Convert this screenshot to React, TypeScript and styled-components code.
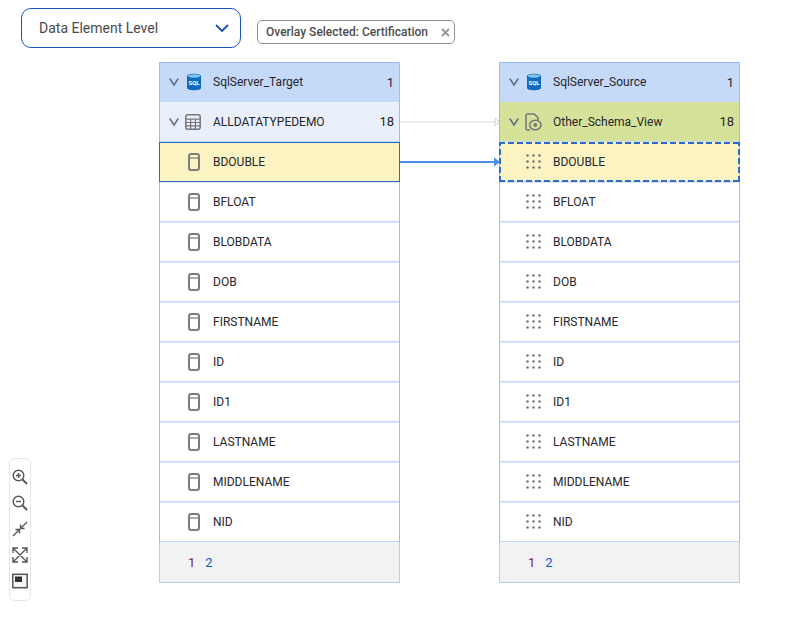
import React from 'react'
import styled, { createGlobalStyle } from 'styled-components'

const fields = ['BDOUBLE', 'BFLOAT', 'BLOBDATA', 'DOB', 'FIRSTNAME', 'ID', 'ID1', 'LASTNAME', 'MIDDLENAME', 'NID']

const GlobalStyle = createGlobalStyle`
  html, body {
    margin: 0;
    background: #fff;
    font-family: Roboto, "Liberation Sans", sans-serif;
  }
`

const Page = styled.div`
  width: 785px;
  height: 621px;
  overflow: hidden;
`

const TopBar = styled.div`
  display: flex;
  align-items: center;
  gap: 16px;
  height: 40px;
  padding: 8px 0 0 21px;
`

const LevelSelect = styled.div`
  box-sizing: border-box;
  width: 220px;
  height: 40px;
  display: flex;
  align-items: center;
  justify-content: space-between;
  padding: 0 11px 0 17px;
  border: 1px solid #1757c2;
  border-radius: 10px;
  font-size: 14px;
  color: #4a4a4a;
`

const OverlayChip = styled.div`
  box-sizing: border-box;
  width: 198px;
  height: 24px;
  margin-top: 8px;
  display: flex;
  align-items: center;
  justify-content: space-between;
  padding: 0 4px 0 8px;
  border: 1px solid #8c8c8c;
  border-radius: 5px;
  font-size: 12px;
  font-weight: 500;
  color: #4d4d4d;
`

const Stage = styled.div`
  display: flex;
  height: 539px;
  padding: 14px 0 0 9px;
`

const ZoomBar = styled.div`
  box-sizing: border-box;
  align-self: flex-end;
  width: 22px;
  height: 143px;
  margin-right: 128px;
  display: flex;
  flex-direction: column;
  align-items: center;
  gap: 10px;
  padding: 10px 0;
  border: 1px solid #e6e6e6;
  border-radius: 6px;
`

const Panel = styled.div`
  box-sizing: border-box;
  width: 241px;
  height: 521px;
  border: 1px solid #98bdf8;
`

type Tone = 'source' | 'entity' | 'view' | 'field' | 'picked' | 'dashed'

const toneColors: Record<Tone, string> = {
  source: '#c5d9f8',
  entity: '#e9f0fc',
  view: '#d6e29a',
  field: '#fff',
  picked: '#fbf3c2',
  dashed: '#fbf3c2',
}

const dash = '#2f6cc6'

const Row = styled.div<{ $tone: Tone }>`
  position: relative;
  box-sizing: border-box;
  height: 40px;
  display: flex;
  align-items: center;
  font-size: 12px;
  color: #26262b;
  border-bottom: 1px solid #c3d7f8;
  background: ${p => toneColors[p.$tone]};

  &:first-child {
    height: 39px;
  }

  ${p => p.$tone === 'field' && 'box-shadow: inset 0 1px 0 #dfe9fb;'}

  ${p =>
    p.$tone === 'picked' &&
    `
    &::after {
      content: '';
      position: absolute;
      inset: 0 -1px -1px;
      border: 1px solid #2c6cc0;
    }
  `}
  ${p =>
    p.$tone === 'dashed' &&
    `
    &::after {
      content: '';
      position: absolute;
      inset: 0 -1px -1px;
      background:
        repeating-linear-gradient(90deg, ${dash} 0 6px, transparent 6px 9px) top / 100% 2px no-repeat,
        repeating-linear-gradient(90deg, ${dash} 0 6px, transparent 6px 9px) bottom / 100% 2px no-repeat,
        repeating-linear-gradient(0deg, ${dash} 0 6px, transparent 6px 9px) left / 2px 100% no-repeat,
        repeating-linear-gradient(0deg, ${dash} 0 6px, transparent 6px 9px) right / 2px 100% no-repeat;
    }
  `}
`

const Caret = styled.span`
  width: 20px;
  margin-left: 4px;
  display: flex;
  justify-content: center;
`

const IconSlot = styled.span<{ $inset: number }>`
  box-sizing: border-box;
  width: ${p => (p.$inset > 10 ? '53px' : '29px')};
  padding-left: ${p => p.$inset}px;
  display: flex;
`

const Name = styled.span`
  flex: 1;
`

const Count = styled.span`
  margin-right: 5px;
  font-size: 13px;
`

const Pager = styled.div`
  box-sizing: border-box;
  height: 41px;
  margin: 0 -1px -1px;
  display: flex;
  align-items: center;
  gap: 10px;
  padding-left: 28px;
  border: solid #c3cddc;
  border-width: 0 1px 1px;
  border-bottom-color: #b5cdf3;
  background: #f2f2f2;
  font-size: 13px;
`

const PageLink = styled.span<{ $visited?: boolean }>`
  color: ${p => (p.$visited ? '#7a1a6a' : '#1757c2')};
`

const Connector = styled.svg`
  display: block;
  width: 100px;
  height: 240px;
  flex: none;
  margin-right: -1px;
`

const ChevronDown = () => (
  <svg width="12" height="12" viewBox="0 0 12 12" fill="none">
    <path d="M1.7 2.5 6 9l4.3-6.5" stroke="#64738a" strokeWidth="1.6" />
  </svg>
)

const SelectChevron = () => (
  <svg width="14" height="14" viewBox="0 0 14 14" fill="none">
    <path d="M1 4l6 6 6-6" stroke="#1a4fb8" strokeWidth="1.9" />
  </svg>
)

const SqlIcon = () => (
  <svg width="17" height="18" viewBox="-1 0 17 18">
    <path d="M1 3c0-3 14-3 14 0v12c0 3-14 3-14 0z" fill="#0f6cbd" />
    <ellipse cx="8" cy="3" rx="6.2" ry="1.7" fill="#7cc0ee" />
    <text x="8" y="11.5" textAnchor="middle" fontSize="6" fontWeight="700" fill="#fff" fontFamily="Roboto, sans-serif">
      SQL
    </text>
  </svg>
)

const TableIcon = () => (
  <svg width="16" height="16" viewBox="0 0 16 16" fill="none" stroke="#767676" strokeWidth="1.5">
    <rect x="0.8" y="0.8" width="14.4" height="14.4" rx="2" />
    <path d="M.8 5.2h14.4M.8 8.5h14.4M.8 11.8h14.4" strokeWidth="1.2" />
    <path d="M5.6 5.2v10M10.4 5.2v10" strokeWidth="1.2" />
  </svg>
)

const ViewIcon = () => (
  <svg width="17" height="18" viewBox="0 0 17 18" fill="none" stroke="#767676" strokeWidth="1.5">
    <path d="M5 17H2.6A1.6 1.6 0 0 1 1 15.4V2.6A1.6 1.6 0 0 1 2.6 1h6.6l3.8 3.8V7" />
    <ellipse cx="10.3" cy="12" rx="5.7" ry="4.8" />
    <circle cx="10.3" cy="12" r="1.9" fill="#767676" stroke="none" />
  </svg>
)

const ColumnIcon = () => (
  <svg width="12" height="18" viewBox="0 0 12 18" fill="none" stroke="#7c7c7c" strokeWidth="2">
    <rect x="1" y="1" width="10" height="16" rx="2.2" />
    <path d="M1 5h10" strokeWidth="1.2" />
  </svg>
)

const DotsIcon = () => (
  <svg width="15" height="15" viewBox="0 0 15 15" fill="#777">
    {[1.5, 7.5, 13.5].flatMap(y =>
      [1.5, 7.5, 13.5].map(x => <circle key={`${x}-${y}`} cx={x} cy={y} r="1.3" />),
    )}
  </svg>
)

const stroke = { fill: 'none', stroke: '#555', strokeWidth: 1.4 }

const ZoomIn = () => (
  <svg width="16" height="16" viewBox="0 0 16 16" {...stroke}>
    <circle cx="6.5" cy="6.5" r="5.3" />
    <path d="M4 6.5h5M6.5 4v5" />
    <path d="M10.5 10.5 15 15" strokeWidth="1.9" />
  </svg>
)

const ZoomOut = () => (
  <svg width="16" height="16" viewBox="0 0 16 16" {...stroke}>
    <circle cx="6.5" cy="6.5" r="5.3" />
    <path d="M4 6.5h5" />
    <path d="M10.5 10.5 15 15" strokeWidth="1.9" />
  </svg>
)

const Collapse = () => (
  <svg width="16" height="16" viewBox="0 0 16 16" {...stroke}>
    <path d="M1 15 7.5 8.5M15 1 8.5 7.5" />
    <path d="M3.5 8.5h4v4M12.5 7.5h-4v-4" />
  </svg>
)

const Expand = () => (
  <svg width="16" height="16" viewBox="0 0 16 16" {...stroke}>
    <path d="M1 1l14 14M15 1 1 15M1 6V1h5M10 1h5v5M15 10v5h-5M6 15H1v-5" />
  </svg>
)

const Minimap = () => (
  <svg width="16" height="16" viewBox="0 0 16 16">
    <rect x="0.8" y="1.3" width="14.4" height="13.4" fill="#f4f4f4" stroke="#555" strokeWidth="1.5" />
    <rect x="3" y="3.5" width="7" height="5.5" fill="#333" />
  </svg>
)

const App: React.FC = () => {
  return (
    <Page>
      <GlobalStyle />
      <TopBar>
        <LevelSelect>
          Data Element Level
          <SelectChevron />
        </LevelSelect>
        <OverlayChip>
          Overlay Selected: Certification
          <svg width="9" height="9" viewBox="0 0 9 9">
            <path d="M1 1l7 7M8 1 1 8" stroke="#999" strokeWidth="2" />
          </svg>
        </OverlayChip>
      </TopBar>
      <Stage>
        <ZoomBar>
          <ZoomIn />
          <ZoomOut />
          <Collapse />
          <Expand />
          <Minimap />
        </ZoomBar>
        <Panel>
          <Row $tone="source">
            <Caret><ChevronDown /></Caret>
            <IconSlot $inset={1}><SqlIcon /></IconSlot>
            <Name>SqlServer_Target</Name>
            <Count>1</Count>
          </Row>
          <Row $tone="entity">
            <Caret><ChevronDown /></Caret>
            <IconSlot $inset={1}><TableIcon /></IconSlot>
            <Name>ALLDATATYPEDEMO</Name>
            <Count>18</Count>
          </Row>
          {fields.map((field, index) => (
            <Row key={field} $tone={index === 0 ? 'picked' : 'field'}>
              <IconSlot $inset={28}><ColumnIcon /></IconSlot>
              <Name>{field}</Name>
            </Row>
          ))}
          <Pager>
            <PageLink $visited>1</PageLink>
            <PageLink>2</PageLink>
          </Pager>
        </Panel>
        <Connector viewBox="0 0 100 240">
          <path d="M0 60h95" stroke="#e6e6e6" strokeWidth="1.5" />
          <path d="M95 56.5 99.5 60 95 63.5z" fill="#fff" stroke="#cfcfcf" />
          <path d="M0 100h95" stroke="#4a90e8" strokeWidth="1.8" />
          <path d="M94 95.5 100 100 94 104.5z" fill="#4a90e8" />
        </Connector>
        <Panel>
          <Row $tone="source">
            <Caret><ChevronDown /></Caret>
            <IconSlot $inset={1}><SqlIcon /></IconSlot>
            <Name>SqlServer_Source</Name>
            <Count>1</Count>
          </Row>
          <Row $tone="view">
            <Caret><ChevronDown /></Caret>
            <IconSlot $inset={1}><ViewIcon /></IconSlot>
            <Name>Other_Schema_View</Name>
            <Count>18</Count>
          </Row>
          {fields.map((field, index) => (
            <Row key={field} $tone={index === 0 ? 'dashed' : 'field'}>
              <IconSlot $inset={26}><DotsIcon /></IconSlot>
              <Name>{field}</Name>
            </Row>
          ))}
          <Pager>
            <PageLink $visited>1</PageLink>
            <PageLink>2</PageLink>
          </Pager>
        </Panel>
      </Stage>
    </Page>
  )
}

export default App
